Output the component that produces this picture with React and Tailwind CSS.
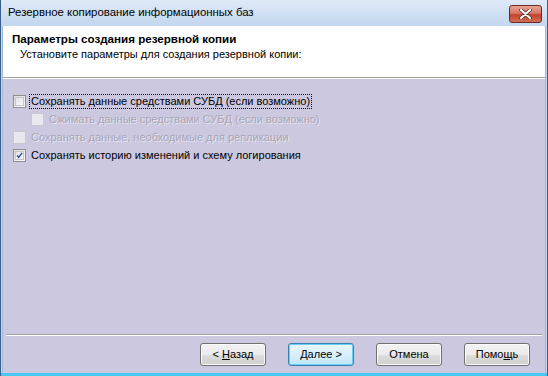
import React from "react";

function Check({ checked, disabled }) {
  return (
    <span
      className={
        "inline-flex items-center justify-center w-[13px] h-[13px] shrink-0 border " +
        (disabled
          ? "border-[#c8c8d0] bg-[#e8e8ee]"
          : "border-[#8e8f8f] bg-gradient-to-br from-[#dcdcdc] to-[#fbfbfb]")
      }
    >
      {!disabled && (
        <span className="w-[9px] h-[9px] border border-[#c6c6c6] bg-gradient-to-br from-[#e3e3e3] to-[#f8f8f8] flex items-center justify-center">
          {checked && (
            <svg width="9" height="9" viewBox="0 0 9 9">
              <path d="M1.5 4.5 L3.5 7 L7.8 1.2" fill="none" stroke="#2a4ea0" strokeWidth="1.8" />
            </svg>
          )}
        </span>
      )}
    </span>
  );
}

function Btn({ children, def }) {
  return (
    <div
      className={
        "w-[66px] h-[23px] rounded-[3px] border flex items-center justify-center text-[11px] text-black " +
        (def
          ? "border-[#3c7fb1] shadow-[inset_0_0_0_1px_#68d0f5] bg-gradient-to-b from-[#eaf6fd] via-[#d9f0fc] to-[#bee6fd]"
          : "border-[#707070] shadow-[inset_0_0_0_1px_#fbfbfb] bg-[linear-gradient(to_bottom,#f2f2f2_0%,#ebebeb_50%,#dddddd_51%,#cfcfcf_100%)]")
      }
    >
      {children}
    </div>
  );
}

export default function App() {
  return (
    <div
      className="w-[548px] h-[376px] flex flex-col bg-[#c4d7ee] border-l border-r border-[#3b5f8a] overflow-hidden"
      style={{ fontFamily: '"Liberation Sans", Arial, sans-serif' }}
    >
      {/* Title bar */}
      <div className="h-[26px] shrink-0 flex items-center pl-[7px] pr-[5px] bg-gradient-to-b from-[#dfeaf7] to-[#c2d6ee]">
        <span className="text-[11.4px] text-black flex-1">Резервное копирование информационных баз</span>
        <div className="w-[33px] h-[18px] mt-[1px] rounded-[3px] border border-[#6d2a22] bg-[linear-gradient(to_bottom,#e8a392_0%,#d47a68_45%,#c2422c_55%,#d0705a_100%)] flex items-center justify-center">
          <svg width="13" height="10" viewBox="0 0 13 10">
            <path d="M2 1 L11 9 M11 1 L2 9" stroke="#5a2a25" strokeWidth="3.6" strokeLinecap="round" />
            <path d="M2 1 L11 9 M11 1 L2 9" stroke="#ffffff" strokeWidth="2.2" strokeLinecap="round" />
          </svg>
        </div>
      </div>

      <div className="flex-1 flex flex-col mx-[1px] border-l border-r border-[#9db9d8]">
        {/* Header */}
        <div className="h-[51px] shrink-0 bg-white flex flex-col pl-[9px] pt-[5px]">
          <div className="text-[11.6px] font-bold text-black leading-[15px]">Параметры создания резервной копии</div>
          <div className="text-[11px] text-black leading-[15px] mt-[1px] pl-[8px]">Установите параметры для создания резервной копии:</div>
        </div>
        <div className="h-[1px] bg-[#a0a0a0]" />
        <div className="h-[1px] bg-white" />

        {/* Body */}
        <div className="flex-1 bg-[#ccc8e0] flex flex-col">
          <div className="flex flex-col pl-[10px] pt-[16px] gap-[5px] text-[11px] leading-[13px]">
            <div className="flex items-center gap-[4px]">
              <Check />
              <span className="px-[1px] outline-1 outline-dotted outline-black text-black">Сохранять данные средствами СУБД (если возможно)</span>
            </div>
            <div className="flex items-center gap-[4px] pl-[18px]">
              <Check disabled />
              <span className="px-[1px] text-[#a8a6b6] [text-shadow:1px_1px_0_#e6e4f0]">Сжимать данные средствами СУБД (если возможно)</span>
            </div>
            <div className="flex items-center gap-[4px]">
              <Check disabled />
              <span className="px-[1px] text-[#a8a6b6] [text-shadow:1px_1px_0_#e6e4f0]">Сохранять данные, необходимые для репликации</span>
            </div>
            <div className="flex items-center gap-[4px]">
              <Check checked />
              <span className="px-[1px] text-black">Сохранять историю изменений и схему логирования</span>
            </div>
          </div>

          <div className="flex-1" />
          <div className="h-[1px] bg-[#a0a0a0] mx-[3px]" />
          <div className="h-[1px] bg-white mx-[3px]" />
          <div className="h-[37px] flex items-start justify-end pt-[7px] pr-[15px]">
            <Btn>
              &lt; <span className="underline ml-[3px]">Н</span>азад
            </Btn>
            <div className="w-[22px]" />
            <Btn def>
              <span className="underline">Д</span>алее &gt;
            </Btn>
            <div className="w-[22px]" />
            <Btn>Отмена</Btn>
            <div className="w-[22px]" />
            <Btn>
              Помо<span className="underline">щ</span>ь
            </Btn>
          </div>
        </div>
      </div>
      <div className="h-[3px] shrink-0 bg-[#46c8f0]" />
    </div>
  );
}
